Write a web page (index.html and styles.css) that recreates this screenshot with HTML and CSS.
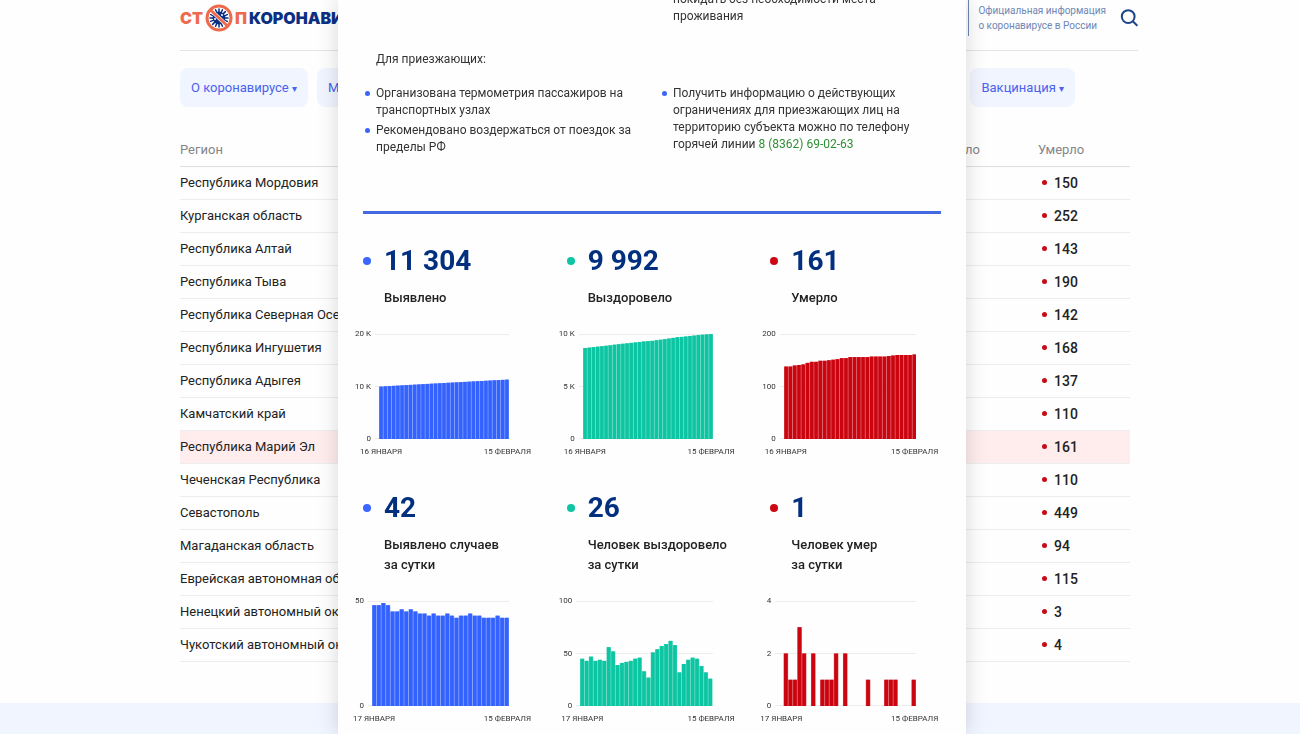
FILE: index.html
```
<!DOCTYPE html>
<html lang="ru">

<head>
    <meta charset="UTF-8">
    <meta name="viewport" content="width=device-width, initial-scale=1">
    <title>Стопкоронавирус.рф</title>
    <link rel="stylesheet" href="styles.css">
    <script src="charts.js" defer></script>
</head>

<body>
    <div class="wrap">
        <header class="header">
            <a class="logo" href="#">
                <span class="logo-stop">СТ</span>
                <svg class="logo-icon" viewBox="0 0 28 28" aria-hidden="true">
                    <circle cx="14" cy="14" r="6.4" fill="#0b2f83" />
                    <g stroke="#0b2f83" stroke-width="1.5" stroke-linecap="round">
                        <path d="M14 5v18M5 14h18M7.6 7.6l12.8 12.8M20.4 7.6L7.6 20.4M10.6 5.7l6.8 16.6M17.4 5.7l-6.8 16.6M5.7 10.6l16.6 6.8M5.7 17.4l16.6-6.8" />
                    </g>
                    <circle cx="10" cy="15" r="1" fill="#fff" />
                    <circle cx="17" cy="11" r="1" fill="#fff" />
                    <path d="M5.5 6l17 16" stroke="#fff" stroke-width="4" />
                    <path d="M5.5 6l17 16" stroke="#ee6a4d" stroke-width="3" />
                    <circle cx="14" cy="14" r="12" fill="none" stroke="#ee6a4d" stroke-width="3" />
                </svg>
                <span class="logo-stop">П</span><span class="logo-name">КОРОНАВИРУС.РФ</span>
            </a>
            <div class="header-right">
                <p class="official">Официальная информация<br>о коронавирусе в России</p>
                <button class="search" type="button" aria-label="Поиск">
                    <svg viewBox="0 0 18 18" width="18" height="18">
                        <circle cx="8.2" cy="7.6" r="6.4" fill="none" stroke="#1c4489" stroke-width="2" />
                        <path d="M12.8 12.2l4.6 4.6" stroke="#1c4489" stroke-width="2" />
                    </svg>
                </button>
            </div>
        </header>

        <nav class="nav">
            <button class="nav-btn" type="button">О коронавирусе <span class="arrow">▾</span></button>
            <button class="nav-btn" type="button">Меры <span class="arrow">▾</span></button>
            <button class="nav-btn nav-last" type="button">Вакцинация <span class="arrow">▾</span></button>
        </nav>

        <table class="regions">
            <thead>
                <tr><th>Регион</th><th class="col-healed">Выздоровело</th><th class="col-died">Умерло</th></tr>
            </thead>
            <tbody>
                <tr><td>Республика Мордовия</td><td></td><td class="died">150</td></tr>
                <tr><td>Курганская область</td><td></td><td class="died">252</td></tr>
                <tr><td>Республика Алтай</td><td></td><td class="died">143</td></tr>
                <tr><td>Республика Тыва</td><td></td><td class="died">190</td></tr>
                <tr><td>Республика Северная Осетия — Алания</td><td></td><td class="died">142</td></tr>
                <tr><td>Республика Ингушетия</td><td></td><td class="died">168</td></tr>
                <tr><td>Республика Адыгея</td><td></td><td class="died">137</td></tr>
                <tr><td>Камчатский край</td><td></td><td class="died">110</td></tr>
                <tr class="active"><td>Республика Марий Эл</td><td></td><td class="died">161</td></tr>
                <tr><td>Чеченская Республика</td><td></td><td class="died">110</td></tr>
                <tr><td>Севастополь</td><td></td><td class="died">449</td></tr>
                <tr><td>Магаданская область</td><td></td><td class="died">94</td></tr>
                <tr><td>Еврейская автономная область</td><td></td><td class="died">115</td></tr>
                <tr><td>Ненецкий автономный округ</td><td></td><td class="died">3</td></tr>
                <tr><td>Чукотский автономный округ</td><td></td><td class="died">4</td></tr>
            </tbody>
        </table>
    </div>
    <footer class="footer"></footer>

    <div class="overlay">
        <div class="modal" role="dialog" aria-label="Республика Марий Эл">
            <div class="columns rules-top">
                <div></div>
                <p class="rule">покидать без необходимости места проживания</p>
            </div>
            <p class="rule rules-title">Для приезжающих:</p>
            <div class="columns">
                <ul class="rules">
                    <li class="rule">Организована термометрия пассажиров на транспортных узлах</li>
                    <li class="rule">Рекомендовано воздержаться от поездок за пределы РФ</li>
                </ul>
                <ul class="rules">
                    <li class="rule">Получить информацию о действующих ограничениях для приезжающих лиц на территорию субъекта можно по телефону горячей линии <a href="tel:88362690263">8 (8362) 69-02-63</a></li>
                </ul>
            </div>

            <div class="stats">
                <section class="stat blue">
                    <h2>11 304</h2>
                    <h3>Выявлено</h3>
                    <div class="chart" data-chart="sick"></div>
                </section>
                <section class="stat green">
                    <h2>9 992</h2>
                    <h3>Выздоровело</h3>
                    <div class="chart" data-chart="healed"></div>
                </section>
                <section class="stat red">
                    <h2>161</h2>
                    <h3>Умерло</h3>
                    <div class="chart" data-chart="died"></div>
                </section>
                <section class="stat blue">
                    <h2>42</h2>
                    <h3>Выявлено случаев<br>за сутки</h3>
                    <div class="chart" data-chart="sickDay"></div>
                </section>
                <section class="stat green">
                    <h2>26</h2>
                    <h3>Человек выздоровело<br>за сутки</h3>
                    <div class="chart" data-chart="healedDay"></div>
                </section>
                <section class="stat red">
                    <h2>1</h2>
                    <h3>Человек умер<br>за сутки</h3>
                    <div class="chart" data-chart="diedDay"></div>
                </section>
            </div>
        </div>
    </div>
</body>

</html>
```
FILE: styles.css
```
* {
    box-sizing: border-box;
    padding: 0;
    margin: 0;
}

body {
    display: flex;
    flex-direction: column;
    min-height: 100vh;
    background: #fefefe;
    color: #222;
    font-family: Roboto, "Liberation Sans", sans-serif;
    font-size: 13px;
}

button {
    border: 0;
    background: none;
    font: inherit;
    cursor: pointer;
}

a {
    text-decoration: none;
}

ul {
    list-style: none;
}

/* header */
.wrap {
    width: 100%;
    max-width: 976px;
    padding-left: 18px;
    margin: 0 auto;
}

.header {
    display: flex;
    justify-content: space-between;
    height: 51px;
    padding-bottom: 14px;
    border-bottom: 1px solid #e3e3e5;
}

.logo {
    display: flex;
    align-items: center;
    height: 36px;
    font-family: Inter, "Open Sans", sans-serif;
    font-size: 16px;
    font-weight: 900;
}

.logo-stop {
    color: #ee6a4d;
}

.logo-name {
    margin-left: 2px;
    color: #0b2f83;
}

.logo-icon {
    width: 28px;
    height: 28px;
    margin: 0 2px;
}

.header-right {
    display: flex;
    align-items: center;
    gap: 14px;
    height: 36px;
}

.official {
    height: 36px;
    padding: 3px 0 3px 9px;
    border-left: 1px solid #6d87b5;
    color: #6d87b5;
    font-size: 10px;
    line-height: 15px;
}

.search {
    width: 18px;
    height: 18px;
}

.search svg {
    display: block;
}

/* menu */
.nav {
    display: flex;
    gap: 9px;
    max-width: 895px;
    margin-top: 17px;
}

.nav-btn {
    height: 39px;
    padding: 0 11px;
    border-radius: 8px;
    background: #f0f5ff;
    color: #4b62ec;
}

.nav-last {
    margin-left: auto;
}

.arrow {
    font-size: 10px;
}

/* table */
.regions {
    width: calc(100% - 8px);
    margin-top: 26px;
    border-collapse: collapse;
    table-layout: fixed;
}

.regions th {
    height: 33px;
    border-bottom: 1px solid #dedede;
    color: #85858a;
    font-weight: 400;
    text-align: left;
}

.regions td {
    height: 33px;
    border-bottom: 1px solid #ededed;
    white-space: nowrap;
}

.regions .col-healed {
    width: 142px;
}

.regions .col-died {
    width: 92px;
}

.regions .active {
    background: #ffeded;
}

.regions .died {
    padding-left: 4px;
    font-size: 14px;
    font-weight: 500;
}

.died::before {
    content: "";
    display: inline-block;
    width: 5px;
    height: 5px;
    margin-right: 7px;
    border-radius: 50%;
    background: #c60c18;
    vertical-align: 3px;
}

.footer {
    flex: 1;
    min-height: 31px;
    margin-top: 41px;
    background: #f0f5ff;
}

/* region window */
.overlay {
    position: fixed;
    top: 0;
    right: 0;
    bottom: 0;
    left: 0;
    display: flex;
    justify-content: center;
    padding-left: 4px;
    overflow: hidden;
}

.modal {
    width: 100%;
    max-width: 628px;
    height: 100%;
    padding: 0 25px;
    overflow: hidden;
    background: #fefefe;
    box-shadow: 0 0 20px rgba(0, 0, 0, 0.16);
}

.columns {
    display: grid;
    grid-template-columns: 1fr 1fr;
    gap: 16px;
}

.rules-top {
    margin-top: -9px;
}

.rules-title {
    margin: 26px 0 17px;
}

.rule {
    position: relative;
    padding: 0 8px 0 13px;
    color: #333;
    font-size: 12px;
    line-height: 17px;
}

.rules .rule + .rule {
    margin-top: 3px;
}

.rules .rule::before {
    content: "";
    position: absolute;
    top: 6px;
    left: 2px;
    width: 5px;
    height: 5px;
    border-radius: 50%;
    background: #3b66f5;
}

.rule a {
    color: #2f8f33;
}

.stats {
    display: grid;
    grid-template-columns: repeat(3, 1fr);
    gap: 35px 33px;
    margin-top: 55px;
    padding-top: 31px;
    border-top: 3px solid #4569e3;
}

.stat h2 {
    display: flex;
    align-items: center;
    gap: 13px;
    color: #02307f;
    font-size: 28px;
    font-weight: 700;
    line-height: 32px;
}

.stat h2::before {
    content: "";
    width: 8px;
    height: 8px;
    border-radius: 50%;
    background: currentColor;
}

.stat h3 {
    margin-top: 11px;
    padding-left: 21px;
    font-size: 13px;
    font-weight: 500;
    line-height: 20px;
}

.blue h2::before {
    background: #3b66ff;
}

.green h2::before {
    background: #10c5a3;
}

.red h2::before {
    background: #cc0814;
}

/* charts */
.chart {
    display: grid;
    grid-template-columns: minmax(9px, auto) 1fr;
    column-gap: 4px;
    row-gap: 8px;
    width: 154px;
    margin: 26px 0 0 -8px;
    color: #333;
    font-size: 8px;
    line-height: 10px;
}

.axis-y {
    display: flex;
    flex-direction: column;
    justify-content: space-between;
    margin: -5px 0;
    text-align: right;
}

.plot {
    display: grid;
    height: 105px;
    padding-left: 4px;
    border-top: 1px solid #ededed;
    border-bottom: 1px solid #ededed;
}

.plot-mid {
    background: linear-gradient(#ededed, #ededed) 0 51px / 100% 1px no-repeat;
}

.plot svg {
    display: block;
    width: 100%;
    height: 105px;
    margin-top: -1px;
}

.axis-x {
    grid-column: 2;
    display: flex;
    justify-content: space-between;
    margin: 0 -22px 0 -15px;
    white-space: nowrap;
    text-transform: uppercase;
}

.bar-edge {
    opacity: 0.65;
}

.blue svg {
    fill: #3362ff;
}

.green svg {
    fill: #0cc5a2;
}

.red svg {
    fill: #cb0510;
}
```
FILE: charts.js
```
const sickDay = [48, 48, 49, 48, 45, 45, 46, 45, 46, 45, 44, 44, 43, 44, 43, 43, 44, 43, 42, 43, 43, 44, 43, 43, 42, 42, 42, 43, 42, 42];
const healedDay = [45, 43, 47, 43, 44, 43, 56, 52, 39, 41, 42, 43, 45, 46, 33, 27, 51, 54, 57, 59, 62, 58, 32, 40, 44, 46, 45, 38, 32, 26];
const diedDay = [0, 2, 1, 1, 3, 2, 0, 2, 0, 1, 1, 1, 2, 0, 2, 0, 0, 0, 0, 1, 0, 0, 0, 1, 1, 1, 0, 0, 0, 1];

// running totals that end at the current total
function totals(days, last) {
    const result = [last];
    for (let i = days.length - 1; i >= 0; i--) {
        result.unshift(result[0] - days[i]);
    }
    return result;
}

const charts = {
    sick: { values: totals(sickDay, 11304), max: 20000, labels: ['20 K', '10 K', '0'], from: '16 января' },
    healed: { values: totals(healedDay, 9992), max: 10000, labels: ['10 K', '5 K', '0'], from: '16 января' },
    died: { values: totals(diedDay, 161), max: 200, labels: ['200', '100', '0'], from: '16 января' },
    sickDay: { values: sickDay, max: 50, labels: ['50', '0'], from: '17 января' },
    healedDay: { values: healedDay, max: 100, labels: ['100', '50', '0'], from: '17 января' },
    diedDay: { values: diedDay, max: 4, labels: ['4', '2', '0'], from: '17 января' }
};

function drawChart(el) {
    const chart = charts[el.dataset.chart];
    const bars = chart.values.map(function(value, i) {
        const h = value / chart.max * 100;
        const y = 100 - h;
        return `<rect class="bar-edge" x="${i}" y="${y}" width="1" height="${h}" />` +
            `<rect x="${i + 0.1}" y="${y}" width="0.8" height="${h}" />`;
    }).join('');
    const mid = chart.labels.length === 3 ? ' plot-mid' : '';
    el.innerHTML = `
        <div class="axis-y">${chart.labels.map(label => `<span>${label}</span>`).join('')}</div>
        <div class="plot${mid}">
            <svg viewBox="0 0 ${chart.values.length} 100" preserveAspectRatio="none">${bars}</svg>
        </div>
        <div class="axis-x"><span>${chart.from}</span><span>15 февраля</span></div>`;
}

document.querySelectorAll('.chart').forEach(drawChart);
```
